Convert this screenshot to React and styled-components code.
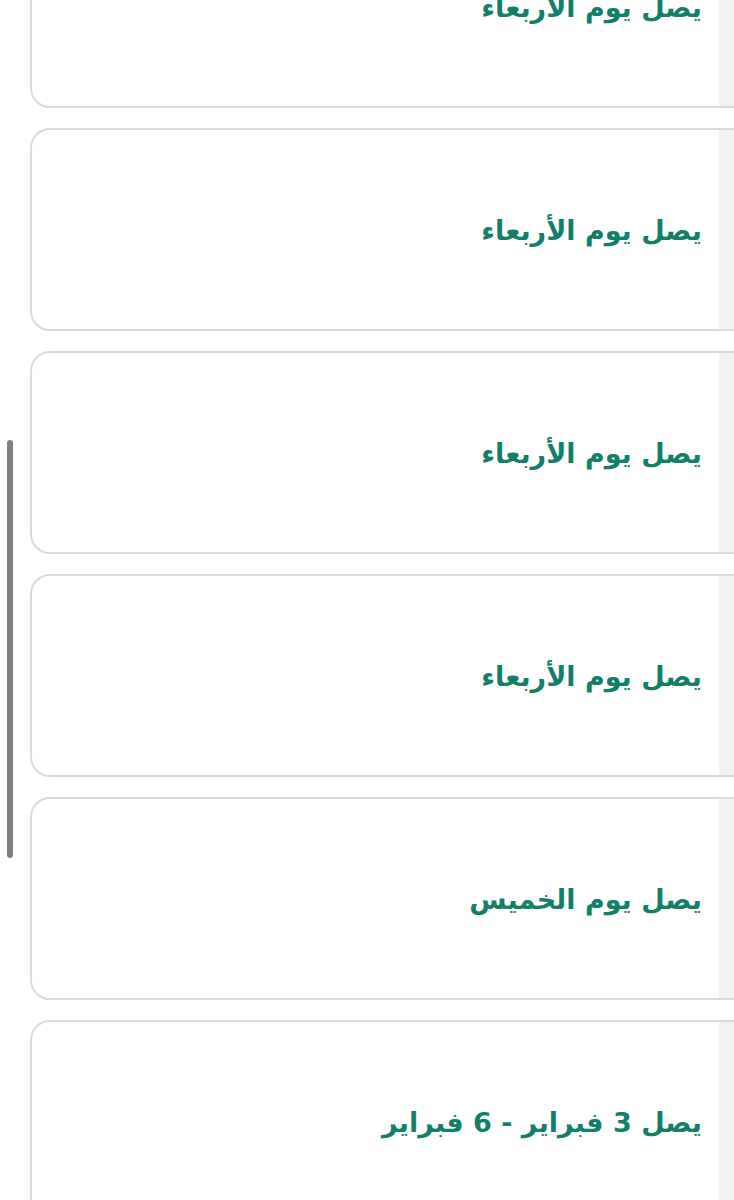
import React from "react";
import styled, { createGlobalStyle } from "styled-components";

const Global = createGlobalStyle`
  html, body { margin: 0; padding: 0; background: #ffffff; overflow: hidden; }
  body { font-family: "DejaVu Sans", "Noto Sans", sans-serif; }
`;

const Page = styled.div`
  position: relative;
  width: 734px;
  height: 1200px;
  overflow: hidden;
`;

const List = styled.div`
  display: flex;
  flex-direction: column;
  gap: 20px;
  margin-top: -95px;
  padding-left: 30px;
`;

const Card = styled.div`
  box-sizing: border-box;
  height: 203px;
  width: calc(100% + 2px);
  border: 2px solid #dadada;
  border-radius: 20px 0 0 20px;
  display: flex;
  overflow: hidden;
  background: #ffffff;
`;

const Body = styled.div`
  flex: 1;
  display: flex;
  align-items: center;
  justify-content: flex-start;
  direction: rtl;
  padding-right: 17px;
  padding-top: 2px;
`;

const Label = styled.span`
  font-family: "DejaVu Sans", sans-serif;
  font-weight: bold;
  font-size: 27px;
  color: #137f69;
  white-space: nowrap;
`;

const Strip = styled.div`
  width: 15px;
  background: #f2f2f2;
`;

const ScrollThumb = styled.div`
  position: absolute;
  left: 7px;
  top: 440px;
  width: 6px;
  height: 418px;
  border-radius: 3px;
  background: #7f7f7f;
`;

const items = [
  "يصل يوم الأربعاء",
  "يصل يوم الأربعاء",
  "يصل يوم الأربعاء",
  "يصل يوم الأربعاء",
  "يصل يوم الخميس",
  "يصل 3 فبراير - 6 فبراير",
];

export default function App() {
  return (
    <Page>
      <Global />
      <List>
        {items.map((t, i) => (
          <Card key={i}>
            <Body>
              <Label>{t}</Label>
            </Body>
            <Strip />
          </Card>
        ))}
      </List>
      <ScrollThumb />
    </Page>
  );
}
